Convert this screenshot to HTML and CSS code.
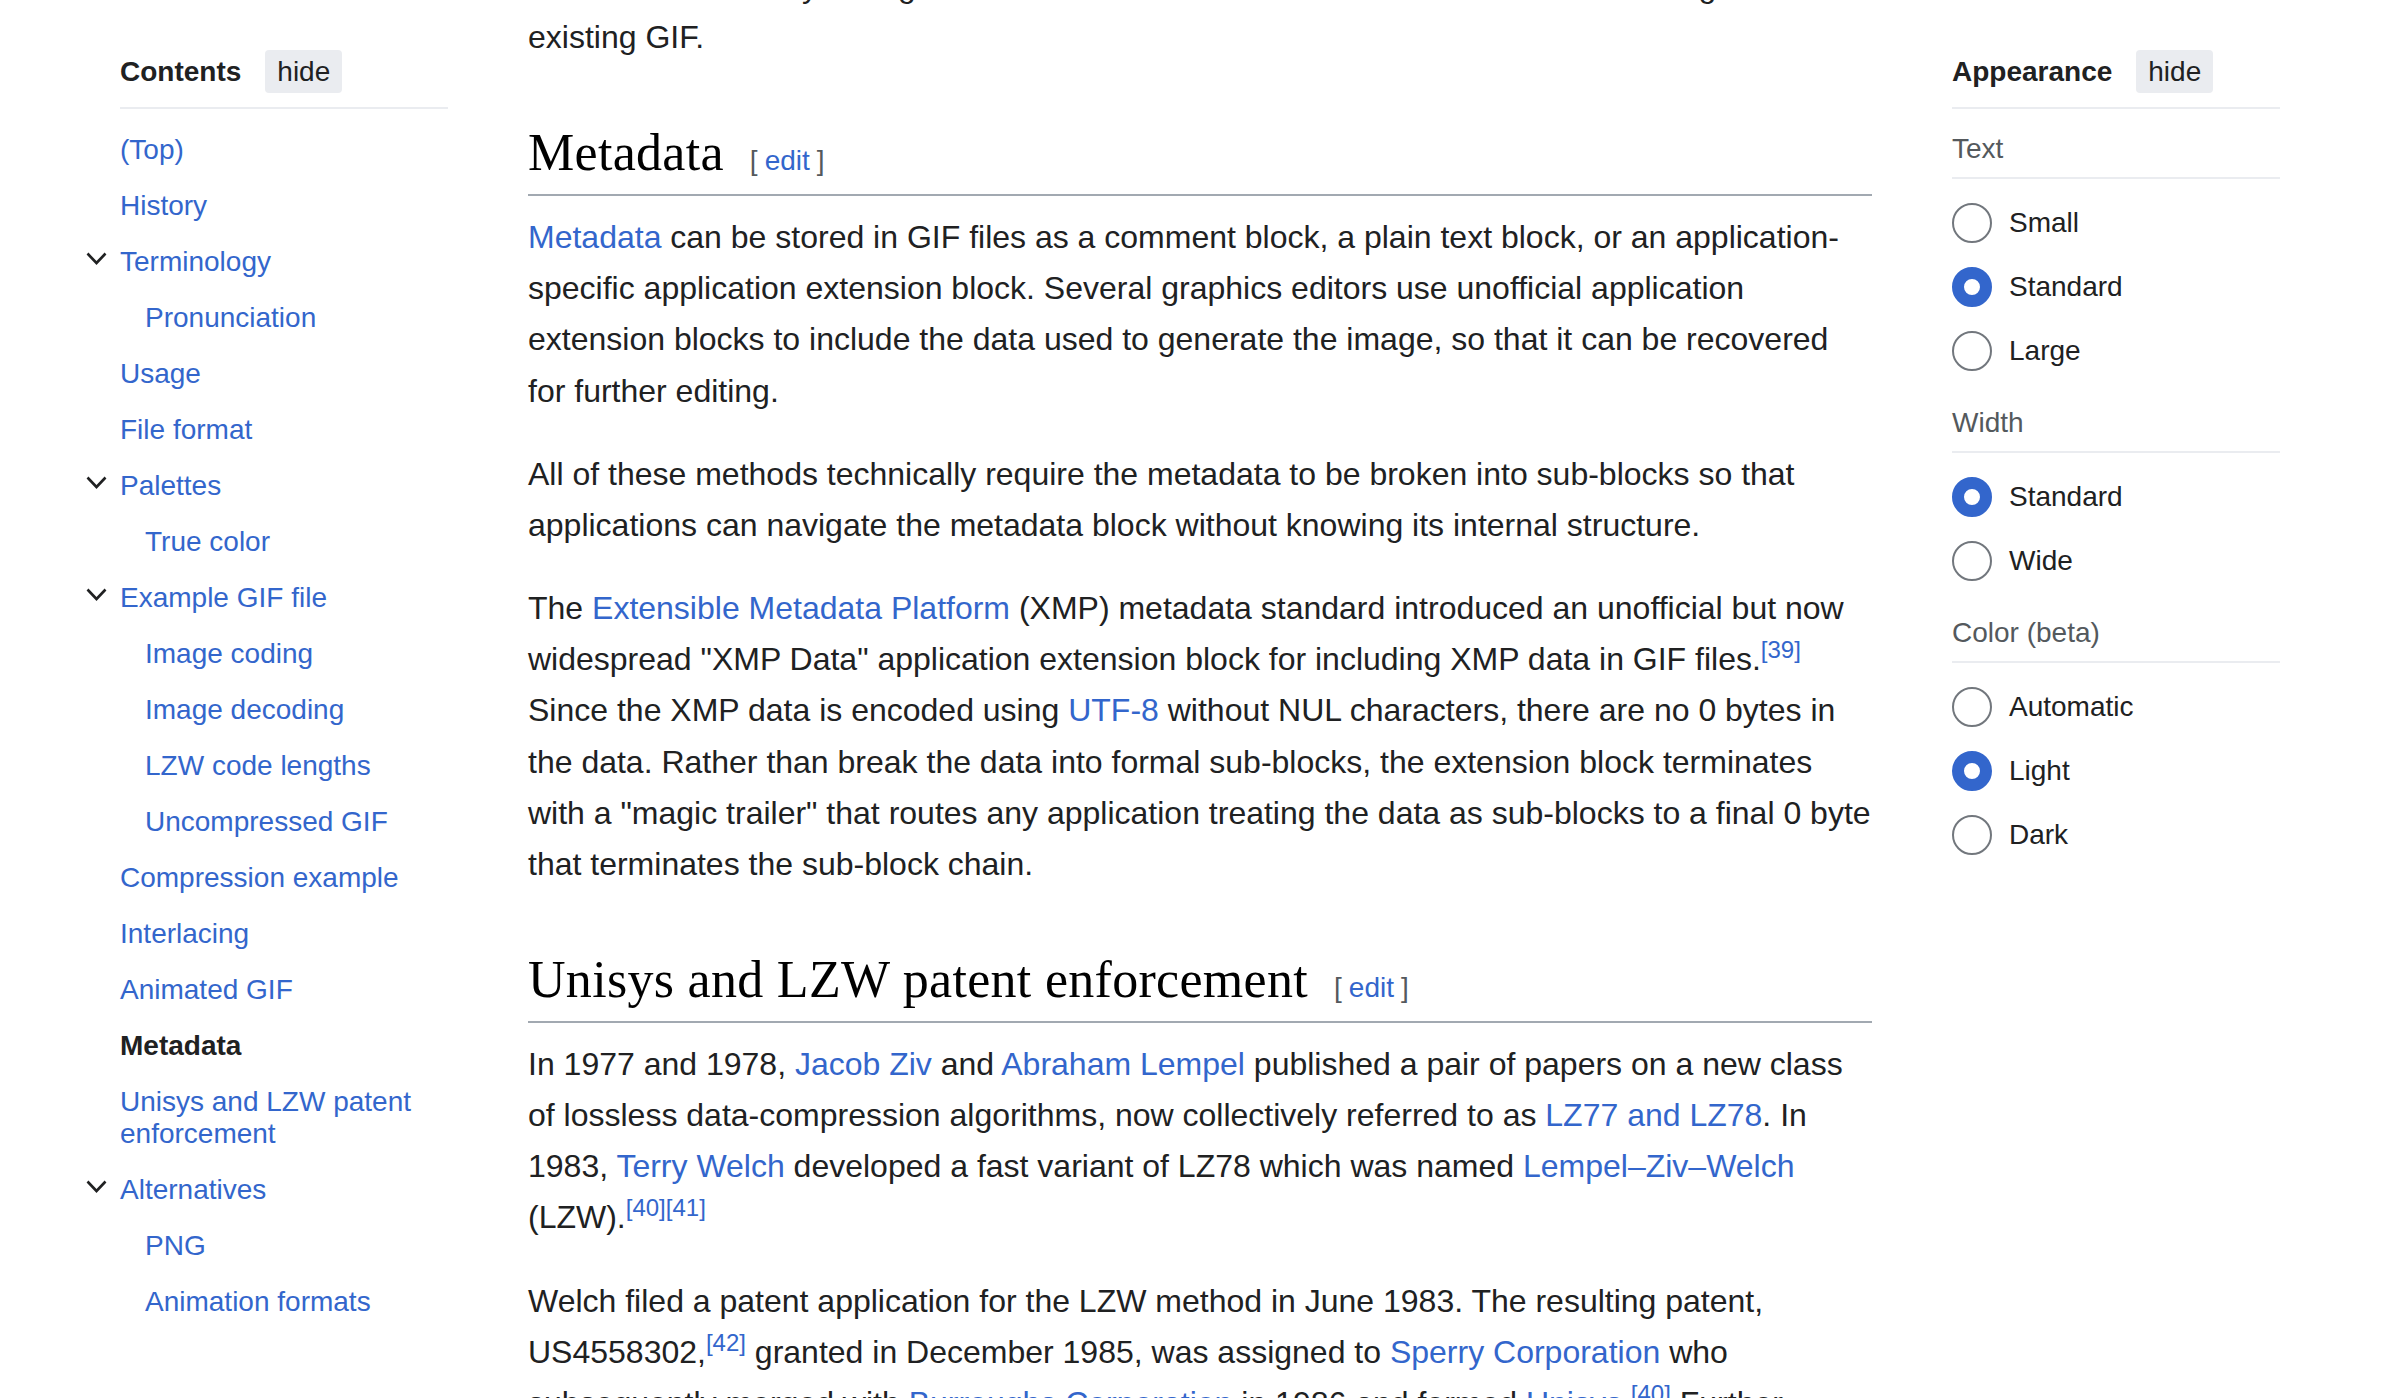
FILE: index.html
```html
<!DOCTYPE html>
<html lang="en">
<head>
<meta charset="utf-8">
<title>GIF - Metadata</title>
<link rel="stylesheet" href="styles.css">
</head>
<body>
<div class="page">
  <nav class="toc">
    <div class="side-head">
      <span class="side-title">Contents</span>
      <button class="hide-btn" type="button">hide</button>
    </div>
    <ul class="toc-list">
      <li><div class="toc-row"><span class="toggle"></span><a href="#">(Top)</a></div></li>
      <li><div class="toc-row"><span class="toggle"></span><a href="#">History</a></div></li>
      <li>
        <div class="toc-row"><span class="toggle"><svg width="21" height="13" viewBox="0 0 21 13"><path d="M1.5 1.5 L10.5 11 L19.5 1.5" fill="none" stroke="#202122" stroke-width="2.6"/></svg></span><a href="#">Terminology</a></div>
        <ul class="toc-sub">
          <li><div class="toc-row"><span class="toggle"></span><a href="#">Pronunciation</a></div></li>
        </ul>
      </li>
      <li><div class="toc-row"><span class="toggle"></span><a href="#">Usage</a></div></li>
      <li><div class="toc-row"><span class="toggle"></span><a href="#">File format</a></div></li>
      <li>
        <div class="toc-row"><span class="toggle"><svg width="21" height="13" viewBox="0 0 21 13"><path d="M1.5 1.5 L10.5 11 L19.5 1.5" fill="none" stroke="#202122" stroke-width="2.6"/></svg></span><a href="#">Palettes</a></div>
        <ul class="toc-sub">
          <li><div class="toc-row"><span class="toggle"></span><a href="#">True color</a></div></li>
        </ul>
      </li>
      <li>
        <div class="toc-row"><span class="toggle"><svg width="21" height="13" viewBox="0 0 21 13"><path d="M1.5 1.5 L10.5 11 L19.5 1.5" fill="none" stroke="#202122" stroke-width="2.6"/></svg></span><a href="#">Example GIF file</a></div>
        <ul class="toc-sub">
          <li><div class="toc-row"><span class="toggle"></span><a href="#">Image coding</a></div></li>
          <li><div class="toc-row"><span class="toggle"></span><a href="#">Image decoding</a></div></li>
          <li><div class="toc-row"><span class="toggle"></span><a href="#">LZW code lengths</a></div></li>
          <li><div class="toc-row"><span class="toggle"></span><a href="#">Uncompressed GIF</a></div></li>
        </ul>
      </li>
      <li><div class="toc-row"><span class="toggle"></span><a href="#">Compression example</a></div></li>
      <li><div class="toc-row"><span class="toggle"></span><a href="#">Interlacing</a></div></li>
      <li><div class="toc-row"><span class="toggle"></span><a href="#">Animated GIF</a></div></li>
      <li><div class="toc-row"><span class="toggle"></span><a href="#" class="current">Metadata</a></div></li>
      <li><div class="toc-row"><span class="toggle"></span><a href="#">Unisys and LZW patent enforcement</a></div></li>
      <li>
        <div class="toc-row"><span class="toggle"><svg width="21" height="13" viewBox="0 0 21 13"><path d="M1.5 1.5 L10.5 11 L19.5 1.5" fill="none" stroke="#202122" stroke-width="2.6"/></svg></span><a href="#">Alternatives</a></div>
        <ul class="toc-sub">
          <li><div class="toc-row"><span class="toggle"></span><a href="#">PNG</a></div></li>
          <li><div class="toc-row"><span class="toggle"></span><a href="#">Animation formats</a></div></li>
        </ul>
      </li>
    </ul>
  </nav>

  <main class="content">
    <p>Animated items may then give rise to the next frame which is then added at the long tail of an existing GIF.</p>

    <h2>Metadata<span class="editsection"><span class="bracket">[</span><a href="#">edit</a><span class="bracket">]</span></span></h2>
    <p><a href="#">Metadata</a> can be stored in GIF files as a comment block, a plain text block, or an application-specific application extension block. Several graphics editors use unofficial application extension blocks to include the data used to generate the image, so that it can be recovered for further editing.</p>
    <p>All of these methods technically require the metadata to be broken into sub-blocks so that applications can navigate the metadata block without knowing its internal structure.</p>
    <p>The <a href="#">Extensible Metadata Platform</a> (XMP) metadata standard introduced an unofficial but now widespread "XMP Data" application extension block for including XMP data in GIF files.<sup><a href="#">[39]</a></sup> Since the XMP data is encoded using <a href="#">UTF-8</a> without NUL characters, there are no 0 bytes in the data. Rather than break the data into formal sub-blocks, the extension block terminates with a "magic trailer" that routes any application treating the data as sub-blocks to a final 0 byte that terminates the sub-block chain.</p>

    <h2>Unisys and LZW patent enforcement<span class="editsection"><span class="bracket">[</span><a href="#">edit</a><span class="bracket">]</span></span></h2>
    <p>In 1977 and 1978, <a href="#">Jacob Ziv</a> and <a href="#">Abraham Lempel</a> published a pair of papers on a new class of lossless data-compression algorithms, now collectively referred to as <a href="#">LZ77 and LZ78</a>. In 1983, <a href="#">Terry Welch</a> developed a fast variant of LZ78 which was named <a href="#">Lempel–Ziv–Welch</a> (LZW).<sup><a href="#">[40]</a></sup><sup><a href="#">[41]</a></sup></p>
    <p>Welch filed a patent application for the LZW method in June 1983. The resulting patent, US4558302,<sup><a href="#">[42]</a></sup> granted in December 1985, was assigned to <a href="#">Sperry Corporation</a> who subsequently merged with <a href="#">Burroughs Corporation</a> in 1986 and formed <a href="#">Unisys</a>.<sup><a href="#">[40]</a></sup> Further litigation followed over the following years.</p>
  </main>

  <aside class="appearance">
    <div class="side-head">
      <span class="side-title">Appearance</span>
      <button class="hide-btn" type="button">hide</button>
    </div>
    <div class="app-sections">
      <section class="app-section">
        <div class="app-label">Text</div>
        <div class="radio-group">
          <label class="radio-row"><input class="radio" type="radio" name="text">Small</label>
          <label class="radio-row"><input class="radio" type="radio" name="text" checked>Standard</label>
          <label class="radio-row"><input class="radio" type="radio" name="text">Large</label>
        </div>
      </section>
      <section class="app-section">
        <div class="app-label">Width</div>
        <div class="radio-group">
          <label class="radio-row"><input class="radio" type="radio" name="width" checked>Standard</label>
          <label class="radio-row"><input class="radio" type="radio" name="width">Wide</label>
        </div>
      </section>
      <section class="app-section">
        <div class="app-label">Color (beta)</div>
        <div class="radio-group">
          <label class="radio-row"><input class="radio" type="radio" name="color">Automatic</label>
          <label class="radio-row"><input class="radio" type="radio" name="color" checked>Light</label>
          <label class="radio-row"><input class="radio" type="radio" name="color">Dark</label>
        </div>
      </section>
    </div>
  </aside>
</div>
</body>
</html>
```

FILE: styles.css
```css
* {
  box-sizing: border-box;
}

html,
body {
  margin: 0;
  padding: 0;
}

body {
  font-family: "Liberation Sans", Arial, Helvetica, sans-serif;
  color: #202122;
  background: #ffffff;
  height: 1398px;
  overflow: hidden;
}

a {
  color: #3366cc;
  text-decoration: none;
}

.page {
  display: grid;
  grid-template-columns: 328px 1344px 328px;
  column-gap: 80px;
  padding: 0 120px;
  align-items: start;
}

/* ---------- sidebar headers ---------- */
.side-head {
  display: flex;
  align-items: center;
  gap: 24px;
  padding-top: 50px;
  padding-bottom: 14px;
  border-bottom: 2px solid #eaecf0;
}

.side-title {
  font-size: 28px;
  line-height: 32px;
  font-weight: 700;
  color: #202122;
}

.hide-btn {
  font-family: "Liberation Sans", Arial, sans-serif;
  font-size: 28px;
  line-height: 32px;
  height: 43px;
  padding: 0 12px;
  border: 0;
  border-radius: 4px;
  background: #eaecf0;
  color: #202122;
}

/* ---------- table of contents ---------- */
.toc-list {
  list-style: none;
  margin: 13px 0 0 -34px;
  padding: 0;
}

.toc-sub {
  list-style: none;
  margin: 0;
  padding: 0 0 0 25px;
}

.toc-row {
  display: grid;
  grid-template-columns: 34px 1fr;
  padding: 12px 0;
  font-size: 28px;
  line-height: 32px;
}

.toggle {
  display: block;
  height: 32px;
  padding-top: 6px;
}

.toggle svg {
  display: block;
}

.toc-row .current {
  color: #202122;
  font-weight: 700;
}

/* ---------- main content ---------- */
.content {
  margin-top: -39px;
  font-size: 32px;
  line-height: 1.6;
  color: #202122;
}

.content p {
  margin: 0 0 32px;
}

.content h2 {
  font-family: "Liberation Serif", "Times New Roman", serif;
  font-weight: 400;
  font-size: 52px;
  letter-spacing: 0.3px;
  line-height: 1.3;
  color: #000000;
  margin: 56px 0 16px;
  padding-bottom: 7px;
  border-bottom: 2px solid #a2a9b1;
}

.editsection {
  font-family: "Liberation Sans", Arial, sans-serif;
  font-size: 28px;
  letter-spacing: 0;
  margin-left: 26px;
  white-space: nowrap;
}

.editsection .bracket {
  color: #54595d;
}

.editsection a {
  margin: 0 7px;
}

.content sup {
  font-size: 24px;
  line-height: 1;
  vertical-align: super;
}

/* ---------- appearance ---------- */
.app-sections {
  display: flex;
  flex-direction: column;
  gap: 36px;
  padding-top: 24px;
}

.app-label {
  font-size: 28px;
  line-height: 32px;
  color: #54595d;
  padding-bottom: 12px;
  border-bottom: 2px solid #eaecf0;
}

.radio-group {
  display: flex;
  flex-direction: column;
  gap: 24px;
  padding-top: 24px;
}

.radio-row {
  display: flex;
  align-items: center;
  gap: 17px;
  height: 40px;
  font-size: 28px;
  line-height: 32px;
  color: #202122;
}

.radio {
  -webkit-appearance: none;
  appearance: none;
  flex: none;
  width: 40px;
  height: 40px;
  margin: 0;
  border-radius: 50%;
  border: 2px solid #72777d;
  background: #ffffff;
}

.radio:checked {
  border: 12px solid #3366cc;
}
```
